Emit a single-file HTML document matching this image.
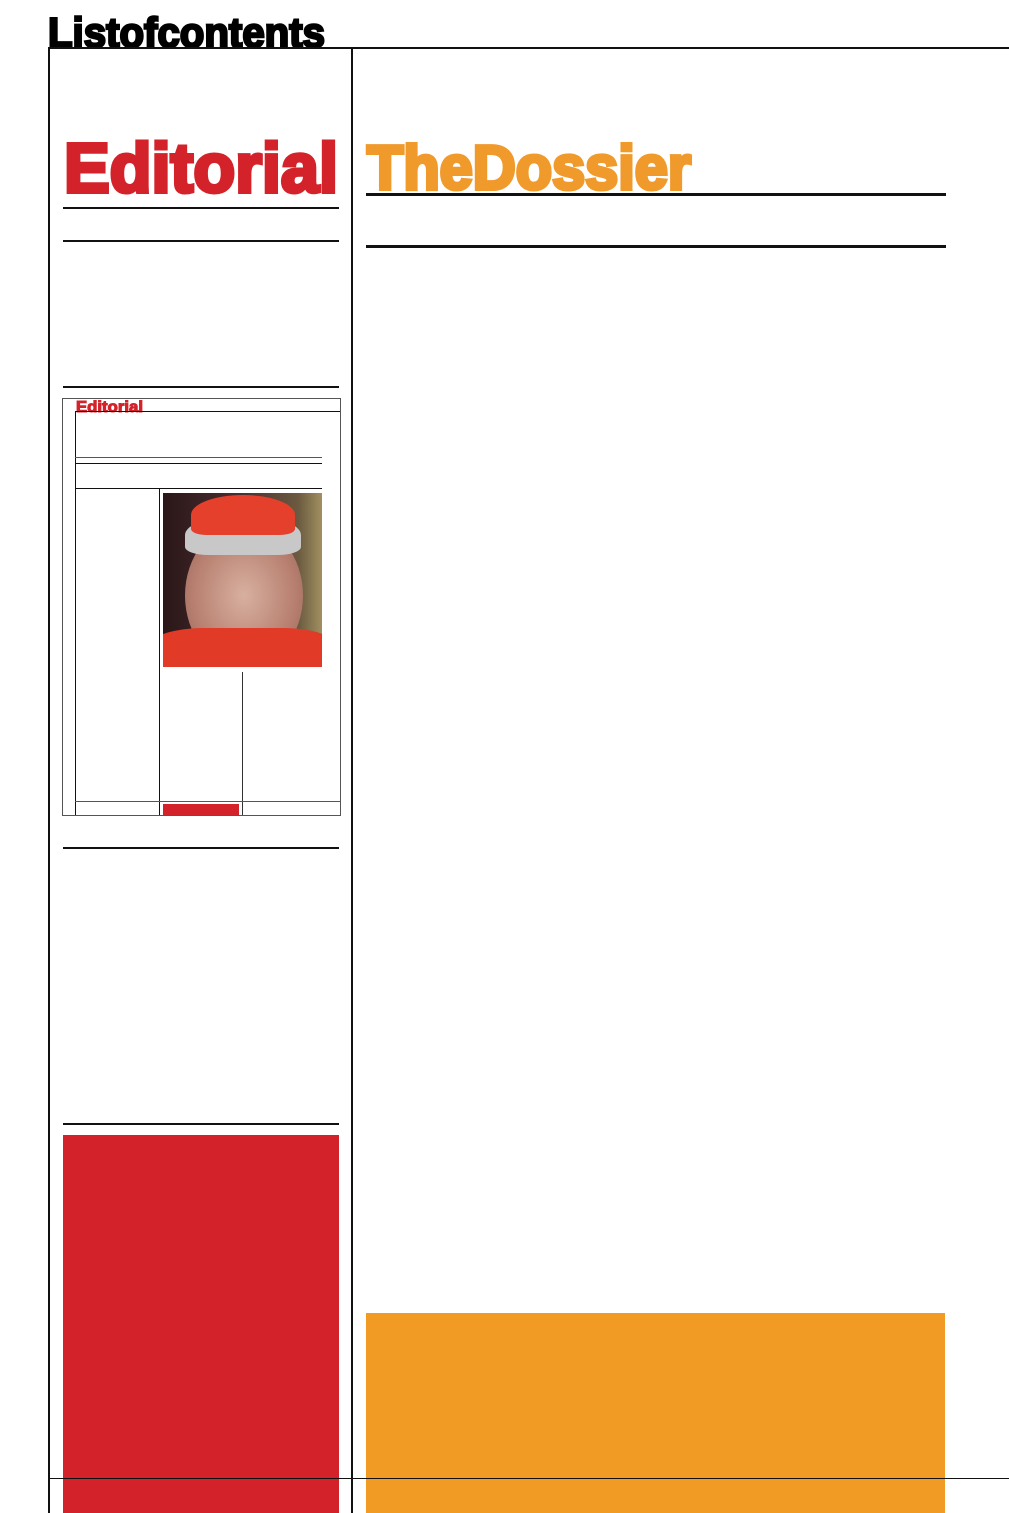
<!DOCTYPE html>
<html><head><meta charset="utf-8"><style>
html,body{margin:0;padding:0;background:#fff;}
body{width:1009px;height:1513px;position:relative;overflow:hidden;font-family:"Liberation Sans",sans-serif;}
.a{position:absolute;}
.k{background:#111;}
</style></head><body>
<svg class="a" style="left:0;top:0" width="1009" height="1513">
<text x="48" y="47" font-family="Liberation Sans" font-weight="bold" font-size="42" textLength="277" lengthAdjust="spacingAndGlyphs" fill="#000" stroke="#000" stroke-width="2.5">Listofcontents</text>
<text x="64" y="192" font-family="Liberation Sans" font-weight="bold" font-size="70" textLength="274" lengthAdjust="spacingAndGlyphs" fill="#d3222a" stroke="#d3222a" stroke-width="4">Editorial</text>
<text x="367" y="189" font-family="Liberation Sans" font-weight="bold" font-size="62" textLength="324" lengthAdjust="spacingAndGlyphs" fill="#f19a2c" stroke="#f19a2c" stroke-width="4">TheDossier</text>
<text x="76" y="412" font-family="Liberation Sans" font-weight="bold" font-size="16" textLength="67" lengthAdjust="spacingAndGlyphs" fill="#d3222a" stroke="#d3222a" stroke-width="1">Editorial</text>
</svg>
<div class="a k" style="left:48px;top:47px;width:961px;height:2px"></div>
<div class="a k" style="left:48px;top:48px;width:2px;height:1465px"></div>
<div class="a k" style="left:351px;top:48px;width:2px;height:1465px"></div>
<div class="a k" style="left:63px;top:207px;width:276px;height:2px"></div>
<div class="a k" style="left:63px;top:240px;width:276px;height:2px"></div>
<div class="a k" style="left:63px;top:386px;width:276px;height:2px"></div>
<div class="a k" style="left:63px;top:847px;width:276px;height:2px"></div>
<div class="a k" style="left:63px;top:1123px;width:276px;height:2px"></div>
<div class="a k" style="left:366px;top:193px;width:580px;height:3px"></div>
<div class="a k" style="left:366px;top:245px;width:580px;height:3px"></div>
<div class="a" style="left:63px;top:1135px;width:276px;height:378px;background:#d3222a"></div>
<div class="a" style="left:366px;top:1313px;width:579px;height:200px;background:#f19a24"></div>
<div class="a k" style="left:48px;top:1478px;width:961px;height:1px"></div>
<div class="a" style="left:62px;top:398px;width:277px;height:416px;border:1px solid #555"></div>
<div class="a k" style="left:75px;top:412px;width:1px;height:403px"></div>
<div class="a k" style="left:75px;top:411px;width:265px;height:1px"></div>
<div class="a" style="left:75px;top:457px;width:247px;height:1px;background:#555"></div>
<div class="a k" style="left:75px;top:463px;width:247px;height:1px"></div>
<div class="a k" style="left:75px;top:488px;width:247px;height:1px"></div>
<div class="a k" style="left:159px;top:489px;width:1px;height:326px"></div>
<div class="a" style="left:242px;top:672px;width:1px;height:143px;background:#333"></div>
<div class="a" style="left:75px;top:801px;width:265px;height:1px;background:#555"></div>
<div class="a" style="left:163px;top:804px;width:76px;height:11px;background:#d3222a"></div>
<div class="a" style="left:163px;top:493px;width:159px;height:174px;overflow:hidden;background:linear-gradient(90deg,#2a1618,#4a3030 50%,#6b5a40 85%,#a09060)">
 <div class="a" style="left:22px;top:30px;width:118px;height:145px;border-radius:50%;background:radial-gradient(ellipse at 50% 50%,#d8b0a0,#b88070 60%,#906058)"></div>
 <div class="a" style="left:22px;top:22px;width:116px;height:40px;border-radius:50% 50% 20% 20%;background:#c8c8c8"></div>
 <div class="a" style="left:28px;top:2px;width:104px;height:40px;border-radius:50% 50% 15% 15%;background:#e5402c"></div>
 <div class="a" style="left:-20px;top:135px;width:200px;height:80px;border-radius:30% 30% 0 0;background:#e13a26"></div>
</div>
</body></html>
